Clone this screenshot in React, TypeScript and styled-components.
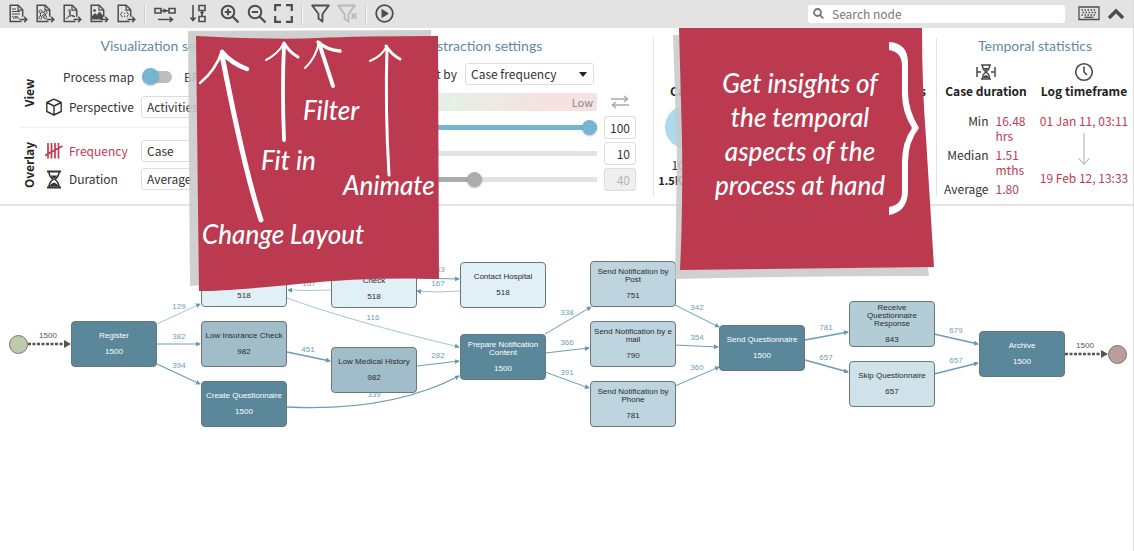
import React from "react";
import styled, { createGlobalStyle, css } from "styled-components";

const sans = '"Noto Sans CJK SC", "Noto Sans", sans-serif';
const red = "#bb3a4f";
const blue = "#75b5d1";

const GlobalStyle = createGlobalStyle`
  *, *::before, *::after { box-sizing: border-box; }
  body { margin: 0; background: #fff; color: #333; font-family: ${sans}; font-size: 12px; line-height: 16px; }
  button, input, select { font: inherit; color: inherit; margin: 0; }
`;

const Page = styled.main`
  position: relative;
  min-height: 100vh;
  overflow: hidden;
  border-right: 1px solid #dcdcdc;
  display: flex;
  flex-direction: column;
`;

/* ---------- toolbar ---------- */

const Toolbar = styled.header`
  display: flex;
  align-items: center;
  height: 28px;
  padding: 0 4px 1px 5px;
  background: #e3e3e3;
`;

const ToolButton = styled.button<{ $wide?: boolean; $faded?: boolean }>`
  width: ${(p) => (p.$wide ? 33 : 27)}px;
  height: 26px;
  padding: ${(p) => (p.$wide ? "0 4px 0 0" : "0")};
  border: 0;
  background: none;
  color: ${(p) => (p.$faded ? "#b9b9b9" : "#4d4d4d")};
  display: flex;
  align-items: center;
  justify-content: center;
  flex: none;
`;

const Separator = styled.span`
  width: 2px;
  height: 20px;
  margin: 0 4px;
  background: #f7f7f7;
  border-left: 1px solid #cfcfcf;
`;

const Search = styled.label`
  display: flex;
  align-items: center;
  gap: 8px;
  width: 257px;
  height: 18px;
  margin: 0 10px 0 auto;
  padding: 0 6px 0 5px;
  background: #fff;
  border-radius: 3px;
  color: #777;
`;

const SearchInput = styled.input`
  flex: 1;
  min-width: 0;
  height: 18px;
  padding: 0;
  border: 0;
  outline: 0;
  background: none;
  &::placeholder { color: #777; opacity: 1; }
`;

/* ---------- settings panel ---------- */

const Panel = styled.section`
  display: grid;
  grid-template-columns: 330fr 323fr 283fr 197fr;
  height: 178px;
  padding: 10px 0 12px;
  border-bottom: 2px solid #e4e4e4;
  overflow: hidden;
`;

const Column = styled.section<{ $divided?: boolean }>`
  min-width: 0;
  border-left: ${(p) => (p.$divided ? "1px solid #e2e2e2" : "0")};
`;

const Title = styled.h2`
  margin: 0;
  font: 400 14px/16px Lato, sans-serif;
  color: #5f8ba1;
  text-align: center;
`;

const SettingGroup = styled.div<{ $first?: boolean }>`
  display: grid;
  grid-template-columns: 20px 1fr;
  column-gap: 6px;
  margin-left: 19px;
  padding: ${(p) => (p.$first ? "13px 0 9px" : "12px 0 0")};
  border-bottom: ${(p) => (p.$first ? "1px solid #efefef" : "0")};
`;

const SideLabel = styled.h3`
  margin: 0;
  font: 700 12px/20px ${sans};
  color: #222;
  writing-mode: vertical-rl;
  transform: rotate(180deg);
  text-align: center;
  width: 20px;
`;

const Rows = styled.div<{ $gap: number }>`
  display: flex;
  flex-direction: column;
  gap: ${(p) => p.$gap}px;
`;

const Row = styled.div<{ $accent?: boolean }>`
  display: grid;
  grid-template-columns: 18px 66px 110px;
  column-gap: 6px;
  align-items: center;
  min-height: 22px;
  color: ${(p) => (p.$accent ? "#c23b50" : "#333")};
`;

const ToggleRow = styled.label`
  display: flex;
  align-items: center;
  height: 20px;
  padding-left: 18px;
  white-space: nowrap;
`;

const Toggle = styled.input`
  appearance: none;
  position: relative;
  width: 30px;
  height: 12px;
  margin: 0 12px 0 8px;
  border-radius: 6px;
  background: #bdbdbd;
  &::before {
    content: "";
    position: absolute;
    left: 0;
    top: -3px;
    width: 17px;
    height: 17px;
    border-radius: 50%;
    background: ${blue};
    box-shadow: 0 1px 2px #0003;
  }
`;

const Select = styled.select`
  appearance: none;
  height: 22px;
  width: 100%;
  padding: 0 20px 0 5px;
  border: 1px solid #ddd;
  border-radius: 3px;
  background: #fff;
  color: #333;
`;

const Abstraction = styled(Column)`
  display: grid;
  grid-template-columns: 1fr 207px 32px;
  grid-template-rows: 16px 30px 30px 26px 26px 26px;
  column-gap: 7px;
  align-items: center;
  padding: 0 17px 0 8px;
  height: 154px;
`;

const AbstractionTitle = styled(Title)`
  grid-column: 1 / -1;
  padding-right: 12px;
`;

const SortRow = styled.label`
  grid-column: 1 / 3;
  display: flex;
  align-items: center;
  justify-content: flex-end;
  gap: 8px;
  padding: 9px 3px 0 0;
`;

const SelectBox = styled.span`
  position: relative;
  width: 129px;
  &::after {
    content: "";
    position: absolute;
    right: 7px;
    top: 9px;
    border: 4px solid transparent;
    border-top: 5px solid #222;
    border-bottom: 0;
  }
`;

const Scale = styled.div`
  grid-column: 1 / 3;
  display: flex;
  justify-content: flex-end;
  align-items: center;
  height: 18px;
  margin-top: 6px;
  padding: 0 4px;
  border-radius: 2px;
  background: linear-gradient(90deg, #d9f0df, #e7efe6 45%, #f6e1e3 80%);
  color: #888;
  font-size: 11px;
`;

const SwapButton = styled.button`
  border: 0;
  padding: 6px 0 0;
  background: none;
  color: #aaa;
  display: flex;
  justify-content: center;
`;

const Slider = styled.input<{ $fill: string }>`
  grid-column: 2;
  appearance: none;
  width: 100%;
  height: 16px;
  background: linear-gradient(${(p) => p.$fill}, ${(p) => p.$fill}) left center / ${(p) => Number(p.defaultValue)}% 5px no-repeat,
    linear-gradient(#e3e3e3, #e3e3e3) center / 100% 5px no-repeat;
  &::-webkit-slider-thumb {
    appearance: none;
    width: 15px;
    height: 15px;
    border-radius: 50%;
    background: ${(p) => p.$fill};
    box-shadow: 0 1px 2px #0004;
  }
`;

const NumberBox = styled.input`
  width: 32px;
  height: 23px;
  padding: 0 5px;
  border: 1px solid #ddd;
  border-radius: 3px;
  text-align: right;
  background: #fff;
  color: #333;
  &:disabled { background: #efefef; color: #b5b5b5; }
`;

const Stats = styled.div`
  display: flex;
  justify-content: space-between;
  padding: 44px 10px 0 3px;
`;

const Stat = styled.div`
  display: flex;
  flex-direction: column;
  align-items: center;
  width: 60px;
`;

const StatName = styled.h3`
  margin: 0;
  font: 700 12px/18px ${sans};
  color: #222;
  white-space: nowrap;
`;

const Disc = styled.span`
  width: 44px;
  height: 44px;
  margin: 5px 0 8px;
  border-radius: 50%;
  background: #add9ec;
`;

const StatValue = styled.b`
  font-size: 11px;
  line-height: 15px;
  color: #222;
`;

const Temporal = styled.div`
  display: grid;
  grid-template-columns: 1fr 1fr;
  padding-top: 8px;
`;

const TemporalPart = styled.div`
  display: flex;
  flex-direction: column;
  align-items: center;
  color: #4a4a4a;
`;

const Durations = styled.dl`
  display: grid;
  grid-template-columns: 50px 38px;
  gap: 4px 7px;
  margin: 13px 0 0;
  line-height: 15px;
  color: #333;
`;

const Term = styled.dt`
  text-align: right;
`;

const Value = styled.dd`
  margin: 0;
  color: #c23b50;
`;

const Timeframe = styled.div`
  display: flex;
  flex-direction: column;
  align-items: center;
  gap: 3px;
  margin-top: 13px;
  line-height: 15px;
  color: #c23b50;
  white-space: nowrap;
`;

/* ---------- process map ---------- */

const Canvas = styled.section`
  position: relative;
  flex: 1;
  min-height: 345px;
  font-family: "Liberation Sans", sans-serif;
`;

const Edges = styled.svg`
  position: absolute;
  inset: 0;
  width: 100%;
  height: 100%;
`;

const tones = {
  full: css`background: #5b879a; color: #fff;`,
  strong: css`background: #a1bdca; color: #2b2b2b;`,
  mid: css`background: #b3cdd7; color: #2b2b2b;`,
  soft: css`background: #bed5df; color: #2b2b2b;`,
  pale: css`background: #cfe2e9; color: #2b2b2b;`,
  faint: css`background: #e1f0f7; color: #2b2b2b;`,
};

const NodeBox = styled.div<{ $x: number; $y: number; $tone: keyof typeof tones }>`
  position: absolute;
  left: ${(p) => p.$x}px;
  top: ${(p) => p.$y}px;
  width: 86px;
  height: 46px;
  display: flex;
  flex-direction: column;
  align-items: center;
  justify-content: center;
  gap: 8px;
  border: 1px solid #69777d;
  border-radius: 4px;
  font-size: 8px;
  line-height: 8px;
  text-align: center;
  white-space: pre;
  ${(p) => tones[p.$tone]}
`;

const Terminal = styled.div<{ $x: number; $y: number; $fill: string }>`
  position: absolute;
  left: ${(p) => p.$x}px;
  top: ${(p) => p.$y}px;
  width: 19px;
  height: 19px;
  border: 1px solid #777;
  border-radius: 50%;
  background: ${(p) => p.$fill};
`;

/* ---------- sticky notes ---------- */

const Note = styled.aside<{ $x: number; $y: number; $w: number; $h: number }>`
  position: absolute;
  left: ${(p) => p.$x}px;
  top: ${(p) => p.$y}px;
  width: ${(p) => p.$w}px;
  height: ${(p) => p.$h}px;
  color: #fff;
  font: italic 500 26px/34px "Liberation Sans Narrow", Lato, sans-serif;
`;

const Paper = styled.svg`
  position: absolute;
  inset: 0;
  overflow: visible;
`;

const Word = styled.span<{ $x: number; $y: number }>`
  position: absolute;
  left: ${(p) => p.$x}px;
  top: ${(p) => p.$y}px;
  white-space: nowrap;
`;

const Message = styled.p`
  position: relative;
  margin: 0;
  padding-top: 38px;
  padding-right: 8px;
  text-align: center;
  white-space: pre;
`;

/* ---------- icons ---------- */

type IconProps = { w: number; h: number; children: React.ReactNode; sw?: number };
const Icon = ({ w, h, sw = 2, children }: IconProps) => (
  <svg width={w} height={h} viewBox={`0 0 ${w} ${h}`} fill="none" stroke="currentColor" strokeWidth={sw} aria-hidden="true">
    {children}
  </svg>
);

const FileIcon = ({ children }: { children: React.ReactNode }) => (
  <Icon w={19} h={19} sw={1.5}>
    <path d="M12.5 17.5H1.2V1.2h8l4.5 4.5v7" />
    <path d="M9 1.2v5h4.7" strokeWidth="1.2" />
    <path d="M10.5 15.5h7M15.2 12.8l2.6 2.7-2.6 2.7" />
    <g strokeWidth="1">{children}</g>
  </Icon>
);

const exports = [
  { name: "Export log", art: <path d="M3 5h4M3 7.5h8M3 10h8M4.500 15a2.500 2.500 0 1 1 5 0M7 12.500v2.500M3 12l1.500 1" /> },
  { name: "Export model", art: <><circle cx="4.500" cy="7.500" r="1.500" /><circle cx="9.500" cy="8.500" r="1.500" /><circle cx="4.500" cy="13.500" r="1.500" /><circle cx="9" cy="13" r="1.500" /><path d="M6 8l2 .5M4.500 9v3M5.500 12.500l3-3M9.300 10v1.500" /></> },
  { name: "Export PDF", art: <path d="M3 15c4-3 5-7 4-9.500-1.500-.5-1.500 2 .5 5 1.500 2 3 2.500 4.500 2M3 15c1-2.500 5-3.500 8-3.500" /> },
  { name: "Export image", art: <><path d="M2.500 15v-3l2.500-2.500 2 2 2.500-3.500 3 3.500V15z" fill="currentColor" /><circle cx="4.500" cy="6.500" r="1" fill="currentColor" /></> },
  { name: "Export JSON", art: <path d="M5.500 8c-1.500 0-.7 2-2 2.500 1.300.5.5 2.500 2 2.500M9.500 8c1.500 0 .7 2 2 2.500-1.300.5-.5 2.500-2 2.500M7.500 9v1M7.500 11.500v1.500" /> },
];

const Lens = ({ plus }: { plus?: boolean }) => (
  <Icon w={20} h={20}>
    <circle cx="8" cy="8" r="6.300" />
    <path d="M12.500 12.500l6 6" strokeWidth="2.300" />
    <path d={plus ? "M4.800 8h6.400M8 4.800v6.400" : "M4.800 8h6.400"} />
  </Icon>
);

const Hourglass = () => (
  <Icon w={18} h={19} sw={1.600}>
    <path d="M2 1.500h14M2 17.500h14" strokeWidth="2" />
    <path d="M4 2c0 4 1.500 5.500 4 7.500C5.500 11.500 4 13 4 17M14 2c0 4-1.500 5.500-4 7.500 2.500 2 4 3.500 4 7.500" />
    <path d="M5.500 5.500h7L9 9.200zM4.500 16.500c0-2 2.500-3 4.500-4 2 1 4.500 2 4.500 4z" fill="currentColor" stroke="none" />
  </Icon>
);

/* ---------- data ---------- */

const nodes: { x: number; y: number; tone: keyof typeof tones; name: string; count: number }[] = [
  { x: 71, y: 115, tone: "full", name: "Register", count: 1500 },
  { x: 201, y: 55, tone: "faint", name: "High Insurance\nCheck", count: 518 },
  { x: 201, y: 115, tone: "strong", name: "Low Insurance Check", count: 982 },
  { x: 201, y: 175, tone: "full", name: "Create Questionnaire", count: 1500 },
  { x: 331, y: 56, tone: "faint", name: "High Medical History\nCheck", count: 518 },
  { x: 331, y: 141, tone: "strong", name: "Low Medical History", count: 982 },
  { x: 460, y: 56, tone: "faint", name: "Contact Hospital", count: 518 },
  { x: 460, y: 128, tone: "full", name: "Prepare Notification\nContent", count: 1500 },
  { x: 590, y: 55, tone: "soft", name: "Send Notification by\nPost", count: 751 },
  { x: 590, y: 115, tone: "soft", name: "Send Notification by e\nmail", count: 790 },
  { x: 590, y: 175, tone: "soft", name: "Send Notification by\nPhone", count: 781 },
  { x: 719, y: 119, tone: "full", name: "Send Questionnaire", count: 1500 },
  { x: 849, y: 95, tone: "mid", name: "Receive\nQuestionnaire\nResponse", count: 843 },
  { x: 849, y: 155, tone: "pale", name: "Skip Questionnaire", count: 657 },
  { x: 979, y: 125, tone: "full", name: "Archive", count: 1500 },
];

const edges: { d: string; n: number; x: number; y: number; light?: boolean; w?: number }[] = [
  { d: "M157 118L200 98", n: 129, x: 179, y: 103, light: true },
  { d: "M157 138H200", n: 382, x: 179, y: 133 },
  { d: "M157 158L200 178", n: 394, x: 179, y: 162, w: 1.200 },
  { d: "M287 146L330 155", n: 451, x: 308, y: 146, w: 1.400 },
  { d: "M331 84Q309 85 288 84", n: 167, x: 309, y: 80, light: true },
  { d: "M417 72L459 73", n: 163, x: 438, y: 66 },
  { d: "M460 85Q438 87 417 85", n: 167, x: 438, y: 80, light: true },
  { d: "M287 92Q350 115 459 141", n: 116, x: 373, y: 114, light: true },
  { d: "M417 160L459 155", n: 282, x: 438, y: 152 },
  { d: "M287 201Q390 206 459 170", n: 339, x: 374, y: 191, w: 1.400 },
  { d: "M545 128L591 101", n: 338, x: 567, y: 109 },
  { d: "M545 147L589 142", n: 366, x: 567, y: 139 },
  { d: "M545 166L589 182", n: 391, x: 567, y: 169 },
  { d: "M675 99L719 121", n: 342, x: 697, y: 104 },
  { d: "M675 139L718 141", n: 354, x: 697, y: 134 },
  { d: "M675 180L719 161", n: 360, x: 697, y: 164 },
  { d: "M805 134L848 126", n: 781, x: 826, y: 124, w: 1.600 },
  { d: "M805 154L848 166", n: 657, x: 826, y: 154, w: 1.600 },
  { d: "M934 128L978 138", n: 679, x: 956, y: 127, w: 1.400 },
  { d: "M934 168L978 157", n: 657, x: 956, y: 157, w: 1.400 },
];

const sliders = [
  { id: "nodes", label: "Nodes", value: 100, fill: blue },
  { id: "arcs", label: "Arcs", value: 10, fill: blue },
  { id: "parallelism", label: "Parallelism", value: 40, fill: "#adadad", disabled: true },
];

export default function App() {
  return (
    <Page>
      <GlobalStyle />
      <Toolbar>
        {exports.map((e) => (
          <ToolButton key={e.name} aria-label={e.name}><FileIcon>{e.art}</FileIcon></ToolButton>
        ))}
        <Separator />
        <ToolButton $wide aria-label="Horizontal layout">
          <Icon w={22} h={18} sw={1.600}><path d="M1 3.500h6v4.500H1zM15 3.500h6v4.500h-6zM7 5.700h8M4 14.500h14M15.500 12l3 2.500-3 2.500" /><path d="M9.500 3.200l4 2.500-4 2.500z" fill="currentColor" stroke="none" /></Icon>
        </ToolButton>
        <ToolButton $wide aria-label="Vertical layout">
          <Icon w={18} h={19} sw={1.600}><path d="M10 1.500h6v5h-6zM10 12.500h6v5h-6zM13 6.500v6M4 1v15.500M1.500 13.500l2.500 3 2.500-3" /><path d="M10.800 8h4.400L13 11z" fill="currentColor" stroke="none" /></Icon>
        </ToolButton>
        <ToolButton aria-label="Zoom in"><Lens plus /></ToolButton>
        <ToolButton aria-label="Zoom out"><Lens /></ToolButton>
        <ToolButton aria-label="Fit in"><Icon w={19} h={19} sw={2.200}><path d="M1.200 7V1.200H7M12 1.200h5.800V7M17.800 12v5.800H12M7 17.800H1.200V12" /></Icon></ToolButton>
        <Separator />
        <ToolButton aria-label="Filter"><Icon w={19} h={19} sw={1.800}><path d="M1.200 1.500h16.600L11.500 10v7.500l-4-3V10z" strokeLinejoin="round" /></Icon></ToolButton>
        <ToolButton $faded aria-label="Clear filter"><Icon w={21} h={19} sw={1.800}><path d="M1.200 1.500h16.600L11.500 10v7.500l-4-3V10z" strokeLinejoin="round" /><path d="M14.500 9.500l5 5M19.500 9.500l-5 5" /></Icon></ToolButton>
        <Separator />
        <ToolButton aria-label="Animate"><Icon w={19} h={19} sw={1.800}><circle cx="9.500" cy="9.500" r="8.300" /><path d="M6.500 4.800l7.500 4.700-7.500 4.700z" fill="currentColor" stroke="none" /></Icon></ToolButton>
        <Search>
          <Icon w={11} h={11} sw={1.800}><circle cx="4.500" cy="4.500" r="3.500" /><path d="M7 7l3.300 3.300" /></Icon>
          <SearchInput placeholder="Search node" aria-label="Search node" />
        </Search>
        <ToolButton aria-label="Keyboard shortcuts">
          <Icon w={22} h={15} sw={1.300}><path d="M1 1h20v12.500H1z" /><path d="M3.500 4h15M4.500 6.500h14M3.500 9h15" strokeDasharray="1.500 1.500" /><path d="M6.500 11.300h9" /></Icon>
        </ToolButton>
        <ToolButton aria-label="Collapse panel"><Icon w={18} h={12} sw={3.500}><path d="M2 10l7-7 7 7" /></Icon></ToolButton>
      </Toolbar>

      <Panel>
        <Column>
          <Title>Visualization settings</Title>
          <SettingGroup $first>
            <SideLabel>View</SideLabel>
            <Rows $gap={9}>
              <ToggleRow>Process map<Toggle type="checkbox" role="switch" />BPMN model</ToggleRow>
              <Row>
                <Icon w={18} h={18} sw={1.400}><path d="M9 1.200l7.200 3.300v9L9 17l-7.200-3.500v-9zM1.800 4.500L9 8l7.200-3.500M9 8v9" strokeLinejoin="round" /></Icon>
                <label htmlFor="perspective">Perspective</label>
                <Select id="perspective"><option>Activities</option></Select>
              </Row>
            </Rows>
          </SettingGroup>
          <SettingGroup>
            <SideLabel>Overlay</SideLabel>
            <Rows $gap={6}>
              <Row $accent>
                <Icon w={18} h={18} sw={1.700}><path d="M3 1v15.500M6.500 1v15.500M10 1v15.500M13.500 1v15.500M0 13.500L17.500 4" /></Icon>
                <label htmlFor="frequency">Frequency</label>
                <Select id="frequency"><option>Case</option></Select>
              </Row>
              <Row>
                <Hourglass />
                <label htmlFor="duration">Duration</label>
                <Select id="duration"><option>Average</option></Select>
              </Row>
            </Rows>
          </SettingGroup>
        </Column>

        <Abstraction>
          <AbstractionTitle>Abstraction settings</AbstractionTitle>
          <SortRow>
            Sort by
            <SelectBox><Select><option>Case frequency</option></Select></SelectBox>
          </SortRow>
          <span />
          <Scale>Low</Scale>
          <SwapButton aria-label="Invert order"><Icon w={18} h={14} sw={1.600}><path d="M0 4h16M13 1l3.500 3-3.500 3M18 10H2M5 7l-3.500 3L5 13" /></Icon></SwapButton>
          {sliders.map((s) => (
            <React.Fragment key={s.id}>
              <Slider type="range" min={0} max={100} defaultValue={s.value} disabled={s.disabled} aria-label={s.label} $fill={s.fill} />
              <NumberBox defaultValue={s.value} disabled={s.disabled} aria-label={`${s.label} value`} />
            </React.Fragment>
          ))}
        </Abstraction>

        <Column $divided>
          <Stats>
            <Stat><StatName>Cases</StatName><Disc /><span>100%</span><StatValue>1.5K / 1.5K</StatValue></Stat>
            <StatName>Variants</StatName>
          </Stats>
        </Column>

        <Column $divided>
          <Title>Temporal statistics</Title>
          <Temporal>
            <TemporalPart>
              <Icon w={20} h={20} sw={1.500}>
                <path d="M1 5v10M19 5v10M1 10h4M19 10h-4M5 3h10M5 17h10M6.500 3c0 4 1 5 3.500 7-2.500 2-3.500 3-3.500 7M13.500 3c0 4-1 5-3.500 7 2.500 2 3.500 3 3.500 7" />
                <path d="M7 6h6l-3 3zM7 16c0-2 1.500-2.500 3-3 1.500.5 3 1 3 3z" fill="currentColor" stroke="none" />
              </Icon>
              <StatName>Case duration</StatName>
              <Durations>
                <Term>Min</Term><Value>16.48 hrs</Value>
                <Term>Median</Term><Value>1.51 mths</Value>
                <Term>Average</Term><Value>1.80</Value>
              </Durations>
            </TemporalPart>
            <TemporalPart>
              <Icon w={20} h={20} sw={1.600}><circle cx="10" cy="10" r="8.300" /><path d="M10 4.500V10l3 3" /></Icon>
              <StatName>Log timeframe</StatName>
              <Timeframe>
                <span>01 Jan 11, 03:11</span>
                <svg width="14" height="36" viewBox="0 0 14 36" fill="none" stroke="#aaa" aria-hidden="true"><path d="M7 2v31M1.500 27L7 33.500l5.500-6.500" /></svg>
                <span>19 Feb 12, 13:33</span>
              </Timeframe>
            </TemporalPart>
          </Temporal>
        </Column>
      </Panel>

      <Canvas aria-label="Process map">
        <Edges fontSize="8" textAnchor="middle">
          <defs>
            <marker id="tip" viewBox="0 0 6 6" refX="5" refY="3" markerWidth="5" markerHeight="5" markerUnits="userSpaceOnUse" orient="auto"><path d="M0 0l6 3-6 3z" fill="#6399b2" /></marker>
          </defs>
          {edges.map((e) => (
            <g key={e.d}>
              <path d={e.d} fill="none" stroke={e.light ? "#a3c5d4" : "#6a9fb6"} strokeWidth={e.w ?? 1} markerEnd="url(#tip)" />
              <text x={e.x} y={e.y} fill="#6c9fb6">{e.n}</text>
            </g>
          ))}
          <g fill="#555" stroke="none">
            <path d="M28 138H65M1065 148H1102" stroke="#555" strokeWidth="2.500" strokeDasharray="3 1.500" />
            <path d="M64 134l7 4-7 4zM1101 144l7 4-7 4z" />
            <text x="48" y="132">1500</text>
            <text x="1085" y="142">1500</text>
          </g>
        </Edges>
        <Terminal $x={9} $y={129} $fill="#bfc9ab" />
        {nodes.map((n) => (
          <NodeBox key={n.name} $x={n.x} $y={n.y} $tone={n.tone}><span>{n.name}</span><span>{n.count}</span></NodeBox>
        ))}
        <Terminal $x={1108} $y={139} $fill="#bf9c9c" />
      </Canvas>

      <Note $x={188} $y={28} $w={252} $h={264}>
        <Paper width="252" height="264" fill="none" stroke="#fff" strokeLinecap="round">
          <path d="M0 3L243 2V240L2 258z" fill="#c8c8c8" fillOpacity=".86" stroke="none" />
          <path d="M8 8Q90 12 130 10T250 8L251 251Q180 249 110 256T11 263z" fill={red} stroke="none" />
          <path d="M73 192C64 165 52 120 34 27" strokeWidth="5" />
          <path d="M12 55Q28 42 34 23" strokeWidth="2.500" />
          <path d="M34 24Q43 35 59 41" strokeWidth="4.500" />
          <path d="M96 112Q94 60 96 17" strokeWidth="3.800" />
          <path d="M78 32Q90 26 96 15" strokeWidth="2" />
          <path d="M96 15Q101 24 110 29" strokeWidth="3" />
          <path d="M145 58L131 15" strokeWidth="4" />
          <path d="M117 40Q128 30 131 14" strokeWidth="2" />
          <path d="M130 14Q139 22 152 23" strokeWidth="3.500" />
          <path d="M201 147Q197 80 199 20" strokeWidth="3" />
          <path d="M182 33Q194 28 199 18" strokeWidth="2" />
          <path d="M198 18Q204 27 212 31" strokeWidth="3" />
        </Paper>
        <Word $x={115} $y={65}>Filter</Word>
        <Word $x={73} $y={115}>Fit in</Word>
        <Word $x={155} $y={140}>Animate</Word>
        <Word $x={14} $y={189}>Change Layout</Word>
      </Note>

      <Note $x={673} $y={28} $w={262} $h={252}>
        <Paper width="262" height="252">
          <path d="M0 7L20 7L250 200L256 248Q120 248 2 251L4 130z" fill="#c8c8c8" fillOpacity=".86" />
          <path d="M6 0H249Q249 60 253 110L261 239L7 242Q10 180 9 110z" fill={red} />
          <path d="M216 14Q235 15 235 35V64Q235 82 246 100Q235 114 235 134V164Q234 184 216 187V179Q229 177 229 164V134Q229 114 239 100Q229 84 229 66V38Q229 24 216 22z" fill="#fff" />
        </Paper>
        <Message>{"Get insights of\nthe temporal\naspects of the\nprocess at hand"}</Message>
      </Note>
    </Page>
  );
}
